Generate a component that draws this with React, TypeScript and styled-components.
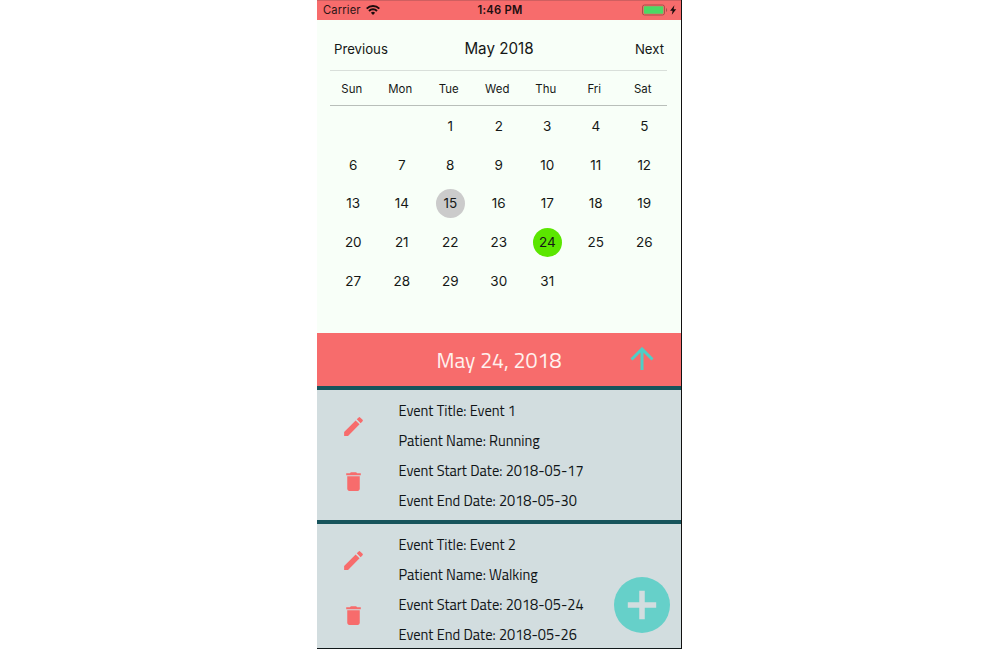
import React from 'react';
import styled, { createGlobalStyle } from 'styled-components';

const GlobalStyle = createGlobalStyle`
  body { margin: 0; background: #fff; }
  * { box-sizing: border-box; }
`;

const coral = '#f76c6c';

const Phone = styled.main`
  position: relative;
  width: 365px;
  height: 649px;
  margin-left: 317px;
  overflow: hidden;
  display: flex;
  flex-direction: column;
  background: #f8fff8;
  border-right: 1px solid #111;
  border-bottom: 1px solid #10181a;
  font-family: Inter, 'Liberation Sans', sans-serif;
  color: #151816;
  white-space: nowrap;
`;

const StatusBar = styled.header`
  flex: none;
  display: grid;
  grid-template-columns: 1fr auto 1fr;
  align-items: center;
  height: 20px;
  padding: 0 4px 0 6px;
  background: ${coral};
  border-top: 1px solid #cf5f60;
  font-size: 11.2px;
  line-height: 19px;
  color: #2b1516;
`;

const Carrier = styled.div`
  display: flex;
  align-items: center;
  gap: 5px;
  letter-spacing: 0.15px;

  svg { margin-top: -2px; }
`;

const Clock = styled.div`
  font-weight: 600;
  letter-spacing: 0.25px;
  color: #200f10;
`;

const Power = styled.div`
  display: flex;
  justify-content: flex-end;

  svg { margin-top: -2px; }
`;

const Calendar = styled.section`
  flex: none;
  height: 313px;
  padding: 0 14px 0 13px;
`;

const MonthBar = styled.div`
  display: grid;
  grid-template-columns: 1fr auto 1fr;
  align-items: center;
  height: 51px;
  padding: 7px 3px 0 4px;
  border-bottom: 1px solid #d9dfda;
  font-size: 13.2px;
`;

const MonthTitle = styled.h1`
  margin: 0;
  font-size: 15.2px;
  font-weight: 400;
`;

const NextLink = styled.span`
  text-align: right;
`;

const Weekdays = styled.div`
  display: grid;
  grid-template-columns: repeat(7, 48.5px);
  align-items: center;
  height: 35px;
  padding-top: 1px;
  border-bottom: 1px solid #b9bfba;
  width: 337px;
  font-size: 11.4px;
  text-align: center;

  span { margin-left: -5px; }
`;

const Days = styled.div`
  display: grid;
  grid-template-columns: repeat(7, 48.5px);
  grid-auto-rows: 38.85px;
  padding-top: 0.3px;
  margin-left: -1px;
`;

const Day = styled.span<{ $fill?: string }>`
  display: grid;
  place-items: center;
  place-self: center;
  width: 29px;
  height: 29px;
  border-radius: 50%;
  background: ${p => p.$fill || 'transparent'};
  font-size: 13.5px;
`;

const DateBar = styled.div`
  flex: none;
  display: grid;
  grid-template-columns: 78px 1fr 78px;
  place-items: center;
  height: 53px;
  background: ${coral};
  color: #fff1ee;
  font-family: 'Titillium Web', 'Noto Sans', sans-serif;
  font-size: 21.4px;

  svg { margin-top: -2px; }
`;

const EventCard = styled.article`
  flex: none;
  display: flex;
  height: 134px;
  background: #d2dddf;
  border-top: 4px solid #17545c;
`;

const Actions = styled.div`
  display: flex;
  flex-direction: column;
  align-items: center;
  gap: 30px;
  width: 73px;
  padding-top: 24px;

  svg { display: block; }
`;

const Details = styled.div`
  padding: 6px 0 0 8.5px;
  font-family: 'Titillium Web', 'Noto Sans', sans-serif;
  font-size: 14.55px;
  line-height: 30px;
  color: #101416;
`;

const Line = styled.div``;

const AddButton = styled.button`
  position: absolute;
  left: 297px;
  top: 577px;
  width: 56px;
  height: 56px;
  padding: 0;
  border: 0;
  border-radius: 50%;
  background: #66d0c9;
  display: grid;
  place-items: center;
`;

const PencilIcon = () => (
  <svg width="25" height="25" viewBox="0 0 24 24" fill={coral}>
    <path d="M3 17.25V21h3.75L17.81 9.94l-3.75-3.75L3 17.25zM20.71 7.04a1 1 0 0 0 0-1.41l-2.34-2.34a1 1 0 0 0-1.41 0l-1.83 1.83 3.75 3.75 1.83-1.83z" />
  </svg>
);

const TrashIcon = () => (
  <svg width="25" height="25" viewBox="0 0 24 24" fill={coral}>
    <path d="M6 19c0 1.1.9 2 2 2h8c1.100 0 2-.9 2-2V7H6v12zM19 4h-3.500l-1-1h-5l-1 1H5v2h14V4z" />
  </svg>
);

const weekdays = ['Sun', 'Mon', 'Tue', 'Wed', 'Thu', 'Fri', 'Sat'];
const fills: Record<number, string> = { 15: '#cbcbcb', 24: '#5be600' };
const events = [
  { title: 'Event 1', patient: 'Running', start: '2018-05-17', end: '2018-05-30' },
  { title: 'Event 2', patient: 'Walking', start: '2018-05-24', end: '2018-05-26' },
];

export default function App() {
  return (
    <>
      <GlobalStyle />
      <Phone>
        <StatusBar>
          <Carrier>
            Carrier
            <svg width="14" height="10" viewBox="0 0 14 10" fill="none" stroke="#1b0c0d" strokeWidth="2">
              <path d="M.7 3.600a9 9 0 0 1 12.600 0M3 6a5.700 5.700 0 0 1 8 0" />
              <path d="M4.900 7.700a3 3 0 0 1 4.200 0L7 9.900z" fill="#1b0c0d" stroke="none" />
            </svg>
          </Carrier>
          <Clock>1:46 PM</Clock>
          <Power>
            <svg width="36" height="12" viewBox="0 0 36 12">
              <rect x="1.500" y="1" width="22" height="10" rx="2" fill="none" stroke="#a94f4b" />
              <rect x="2.800" y="2.300" width="19.500" height="7.500" rx="0.800" fill="#4cd964" />
              <path d="M25 4v4c1.500-.5 1.500-3.500 0-4z" fill="#a94f4b" />
              <path d="M33.400 1.300 29.100 6.800h2.500L30.800 10.700 35.200 5.200h-2.600z" fill="#1b0c0d" />
            </svg>
          </Power>
        </StatusBar>
        <Calendar>
          <MonthBar>
            <span>Previous</span>
            <MonthTitle>May 2018</MonthTitle>
            <NextLink>Next</NextLink>
          </MonthBar>
          <Weekdays>
            {weekdays.map(d => <span key={d}>{d}</span>)}
          </Weekdays>
          <Days>
            <i />
            <i />
            {Array.from({ length: 31 }, (_, i) => i + 1).map(n => (
              <Day key={n} $fill={fills[n]}>{n}</Day>
            ))}
          </Days>
        </Calendar>
        <DateBar>
          <i />
          <span>May 24, 2018</span>
          <svg width="24" height="24" viewBox="0 0 24 24" fill="none" stroke="#4fcfc6" strokeWidth="3">
            <path d="M12 23V2.500M1.500 12.500 12 2l10.500 10.500" />
          </svg>
        </DateBar>
        {events.map(e => (
          <EventCard key={e.title}>
            <Actions>
              <PencilIcon />
              <TrashIcon />
            </Actions>
            <Details>
              <Line>Event Title: {e.title}</Line>
              <Line>Patient Name: {e.patient}</Line>
              <Line>Event Start Date: {e.start}</Line>
              <Line>Event End Date: {e.end}</Line>
            </Details>
          </EventCard>
        ))}
        <AddButton aria-label="Add event">
          <svg width="30" height="30" viewBox="0 0 30 30" stroke="#d2dddf" strokeWidth="5.500">
            <path d="M15 .8v28.400M.8 15h28.400" />
          </svg>
        </AddButton>
      </Phone>
    </>
  );
}
